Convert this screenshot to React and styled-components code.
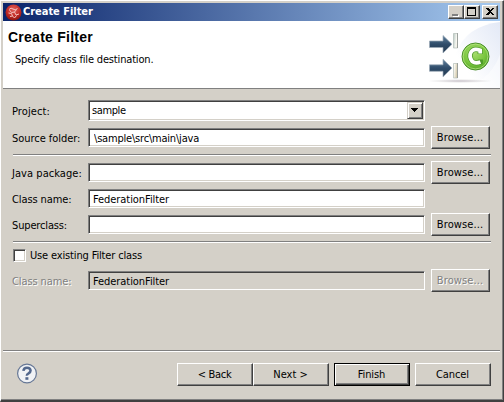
import React from 'react';
import styled, { createGlobalStyle, css } from 'styled-components';

const GlobalStyle = createGlobalStyle`
  * { box-sizing: border-box; }
  body { margin: 0; background: #404040; }
  button, input { font: inherit; color: inherit; margin: 0; }
`;

const Window = styled.main`
  width: 504px;
  height: 402px;
  display: flex;
  flex-direction: column;
  padding: 1px 2px 1px 1px;
  background: #d4d0c8;
  border: solid;
  border-width: 1px 1px 2px 1px;
  border-color: #fff #404040 #404040 #fff;
  box-shadow: inset -1px -1px #808080;
  font-family: 'DejaVu Sans Condensed', 'DejaVu Sans', sans-serif;
  font-stretch: condensed;
  font-size: 11px;
  line-height: 14px;
  color: #000;
  white-space: pre;
`;

const TitleBar = styled.header`
  height: 18px;
  margin: 1px 1px 0;
  padding: 0 2px;
  display: flex;
  align-items: center;
  flex: none;
  background: linear-gradient(90deg, #0a246a, #a6caf0);
`;

const Title = styled.span`
  margin-left: 1px;
  flex: 1;
  color: #fff;
  font-weight: bold;
  letter-spacing: ${(p) => p.$track}px;
`;

const raised = css`
  border: 1px solid;
  border-color: #fff #404040 #404040 #fff;
  box-shadow: inset -1px -1px #808080;
  background: #d4d0c8;
`;

const CaptionButton = styled.button`
  ${raised}
  width: 16px;
  height: 14px;
  padding: 0;
  margin-left: ${(p) => p.$gap || 0}px;
  svg { display: block; }
`;

const Banner = styled.section`
  height: 68px;
  margin: 0 1px;
  flex: none;
  display: flex;
  justify-content: space-between;
  background: #fff;
  border-bottom: 1px solid #808080;
  svg { display: block; }
`;

const BannerText = styled.div`
  padding: 8px 0 0 5px;
`;

const Heading = styled.h1`
  margin: 0;
  font: bold 14px/16px 'Liberation Sans', Arial, sans-serif;
  letter-spacing: ${(p) => p.$track}px;
`;

const Text = styled.span`
  display: block;
  letter-spacing: ${(p) => p.$track || 0}px;
`;

const Description = styled(Text)`
  margin: 8px 0 0 7px;
`;

const Form = styled.section`
  flex: 1;
  padding: 10px 10px 0 10px;
`;

const Row = styled.div`
  display: grid;
  grid-template-columns: 76px 337px 65px;
  align-items: center;
  height: 23px;
  margin-bottom: ${(p) => p.$after}px;
  > button { margin-left: 6px; }
`;

const Label = styled(Text)`
  padding-top: 2px;
  ${(p) => p.$disabled && css`color: #808080; text-shadow: 1px 1px #fff;`}
`;

const sunken = css`
  border: 1px solid;
  border-color: #808080 #fff #fff #808080;
  box-shadow: inset 1px 1px #404040, inset -1px -1px #d4d0c8;
`;

const Input = styled.input`
  ${sunken}
  width: 100%;
  height: 19px;
  padding: 1px 4px 0 ${(p) => p.$indent || 4}px;
  outline: none;
  border-radius: 0;
  background: ${(p) => (p.disabled ? '#d4d0c8' : '#fff')};
  color: #000;
  letter-spacing: ${(p) => p.$track || 0}px;
`;

const Combo = styled.div`
  ${sunken}
  height: 21px;
  padding: 1px 1px 1px 3px;
  display: flex;
  align-items: center;
  justify-content: space-between;
  background: #fff;
`;

const ComboText = styled(Text)`
  padding-top: 1px;
`;

const DropButton = styled.button`
  width: 16px;
  height: 17px;
  padding: 0;
  flex: none;
  border: 1px solid;
  border-color: #d4d0c8 #404040 #404040 #d4d0c8;
  box-shadow: inset 1px 1px #fff, inset -1px -1px #808080;
  background: #d4d0c8;
  svg { display: block; }
`;

const Button = styled.button`
  ${raised}
  width: ${(p) => p.$width}px;
  height: 23px;
  padding: 0 1px 0 0;
  margin-left: ${(p) => p.$gap || 0}px;
  border-radius: 0;
  text-align: center;
  line-height: 14px;
  letter-spacing: ${(p) => p.$track || 0}px;
  ${(p) => p.disabled && css`color: #808080; text-shadow: 1px 1px #fff;`}
  ${(p) => p.$primary && css`
    border-color: #000;
    box-shadow: inset 1px 1px #fff, inset -1px -1px #404040, inset -2px -2px #808080;
  `}
`;

const Divider = styled.hr`
  height: 2px;
  margin: 0 0 ${(p) => p.$after || 0}px 1px;
  border: solid;
  border-width: 1px 0;
  border-color: #808080 transparent #fff;
`;

const CheckRow = styled.label`
  display: flex;
  align-items: center;
  height: 19px;
  margin: 0 0 4px 1px;
`;

const CheckBox = styled.input`
  ${sunken}
  appearance: none;
  width: 13px;
  height: 13px;
  margin-right: 4px;
  background: #fff;
`;

const Footer = styled.footer`
  height: 47px;
  padding: 11px 10px 0 14px;
  display: flex;
  flex: none;
`;

const FooterDivider = styled(Divider)`
  margin: 0 1px;
  flex: none;
`;

const Help = styled.span`
  flex: 1;
  svg { display: block; }
`;

function AppIcon() {
  return (
    <svg width="17" height="17" viewBox="0 0 17 17">
      <defs>
        <radialGradient id="ball" cx=".5" cy=".3" r=".7">
          <stop offset="0" stopColor="#e0605a" />
          <stop offset=".6" stopColor="#c22c26" />
          <stop offset="1" stopColor="#8c1410" />
        </radialGradient>
      </defs>
      <circle cx="8.5" cy="8.5" r="8" fill="url(#ball)" />
      <path d="M4 5.500Q6 3 8 5T12.500 4.500M4.500 6l2 2.500 3-.5 2-2.500M3.500 9l3 .5 1 2.500M9.500 8l1.500 3 3-1M5 12.500l2.500-.5 2 2 2-2.500" fill="none" stroke="#f3c2bd" strokeWidth="1" />
    </svg>
  );
}

function BannerArt() {
  return (
    <svg width="75" height="67" viewBox="425 22 75 67">
      <defs>
        <linearGradient id="sweep" x1="0" y1="1" x2="1" y2="0">
          <stop offset=".25" stopColor="#fff" />
          <stop offset="1" stopColor="#e3e9f6" />
        </linearGradient>
        <linearGradient id="arrow" x1="0" y1="0" x2="0" y2="1">
          <stop offset="0" stopColor="#5f7f9b" />
          <stop offset=".5" stopColor="#2f4c6a" />
          <stop offset="1" stopColor="#24384e" />
        </linearGradient>
        <linearGradient id="slot" x1="0" y1="0" x2="1" y2="1">
          <stop offset="0" stopColor="#b6c7c3" />
          <stop offset=".45" stopColor="#fbfaf4" />
          <stop offset="1" stopColor="#c8bd98" />
        </linearGradient>
        <radialGradient id="green" cx=".45" cy=".35" r=".65">
          <stop offset="0" stopColor="#a9dd70" />
          <stop offset=".65" stopColor="#79c63e" />
          <stop offset="1" stopColor="#55a52a" />
        </radialGradient>
        <radialGradient id="shade">
          <stop offset="0" stopColor="#a99cab" stopOpacity=".65" />
          <stop offset="1" stopColor="#bbb" stopOpacity="0" />
        </radialGradient>
      </defs>
      <path d="M456 89V54Q466 27 500 23V89Z" fill="url(#sweep)" />
      <path d="M468 89Q493 77 500 55V89Z" fill="#fff" opacity=".45" />
      <ellipse cx="460" cy="82" rx="33" ry="2" fill="url(#shade)" />
      <path d="M429.500 42H443V36.500L452 45.200 443 54V48.500H429.500Z" fill="url(#arrow)" stroke="#9cabb8" strokeWidth=".7" />
      <path d="M429.500 65.800H443V60.300L452 69 443 77.800V72.300H429.500Z" fill="url(#arrow)" stroke="#9cabb8" strokeWidth=".7" />
      <path d="M453.500 34.500h4v14.500h-4ZM453.500 64.500h4v14.500h-4Z" fill="url(#slot)" stroke="#b3bdb8" strokeWidth=".7" />
      <path d="M457.500 34v15M457.500 64v15" stroke="#7d827f" strokeWidth=".6" />
      <circle cx="475.500" cy="57.500" r="13.500" fill="url(#green)" stroke="#4b8f2c" />
      <circle cx="475.500" cy="57.500" r="12.400" fill="none" stroke="#b6e383" strokeWidth=".8" />
      <path d="M480.200 55V51.300Q473.500 48.700 471 53.200T472.300 62.500Q475.500 65 480.400 63V60.500" fill="none" stroke="#4f9a2b" strokeWidth="5.200" />
      <path d="M480.200 54.600V51.300Q473.500 48.700 471 53.200T472.300 62.500Q475.500 65 480.400 63" fill="none" stroke="#fff" strokeWidth="3.700" />
    </svg>
  );
}

function HelpIcon() {
  return (
    <svg width="22" height="22" viewBox="0 0 22 22">
      <circle cx="11" cy="10.500" r="9.400" fill="#f0f2f5" stroke="#667795" strokeWidth="1.200" />
      <path d="M7.400 7.900Q7.700 4.700 11 4.700T14.600 7.600Q14.600 9.200 12.600 10.300T10.900 12.700" fill="none" stroke="#53688d" strokeWidth="2.500" />
      <path d="M9.400 14.200h3v2.600h-3Z" fill="#53688d" />
    </svg>
  );
}

function Browse({ disabled }) {
  return <Button $width={59} $track={0.1} disabled={disabled}>Browse...</Button>;
}

export default function App() {
  return (
    <>
      <GlobalStyle />
      <Window>
        <TitleBar>
          <AppIcon />
          <Title $track={-0.03}>Create Filter</Title>
          <CaptionButton>
            <svg width="14" height="12"><path d="M4 9h6v2H4Z" fill="#fff" /><path d="M3 8h6v2H3Z" fill="#808080" /></svg>
          </CaptionButton>
          <CaptionButton>
            <svg width="14" height="12"><path d="M2 1h9v9H2ZM3 3v6h7V3Z" fillRule="evenodd" /></svg>
          </CaptionButton>
          <CaptionButton $gap={2}>
            <svg width="14" height="12" shapeRendering="crispEdges"><path d="M3 2h2l2 2 2-2h2L8 5.500 11 9H9L7 7 5 9H3l3-3.500Z" /></svg>
          </CaptionButton>
        </TitleBar>
        <Banner>
          <BannerText>
            <Heading $track={0.25}>Create Filter</Heading>
            <Description $track={-0.17}>Specify class file destination.</Description>
          </BannerText>
          <BannerArt />
        </Banner>
        <Form>
          <Row $after={4}>
            <Label $track={0.1}>Project:</Label>
            <Combo>
              <ComboText $track={-0.4}>sample</ComboText>
              <DropButton>
                <svg width="14" height="15" shapeRendering="crispEdges"><path d="M3 5h7v1H9v1H8v1H7v1H6V8H5V7H4V6H3Z" /></svg>
              </DropButton>
            </Combo>
          </Row>
          <Row $after={5}>
            <Label $track={-0.05}>Source folder:</Label>
            <Input defaultValue="\sample\src\main\java" $indent={5} $track={-0.2} />
            <Browse />
          </Row>
          <Divider $after={5} />
          <Row $after={3}>
            <Label $track={0.05}>Java package:</Label>
            <Input />
            <Browse />
          </Row>
          <Row $after={3}>
            <Label $track={-0.1}>Class name:</Label>
            <Input defaultValue="FederationFilter" $track={-0.06} />
          </Row>
          <Row $after={5}>
            <Label $track={-0.15}>Superclass:</Label>
            <Input />
            <Browse />
          </Row>
          <Divider $after={3} />
          <CheckRow>
            <CheckBox type="checkbox" />
            <Text $track={-0.15}>Use existing Filter class</Text>
          </CheckRow>
          <Row $after={0}>
            <Label $disabled $track={-0.1}>Class name:</Label>
            <Input disabled defaultValue="FederationFilter" $track={-0.06} />
            <Browse disabled />
          </Row>
        </Form>
        <FooterDivider />
        <Footer>
          <Help><HelpIcon /></Help>
          <Button $width={76} $track={-0.3}>&lt; Back</Button>
          <Button $width={76}>Next &gt;</Button>
          <Button $width={76} $gap={5} $primary $track={-0.1}>Finish</Button>
          <Button $width={76} $gap={5} $track={-0.1}>Cancel</Button>
        </Footer>
      </Window>
    </>
  );
}
